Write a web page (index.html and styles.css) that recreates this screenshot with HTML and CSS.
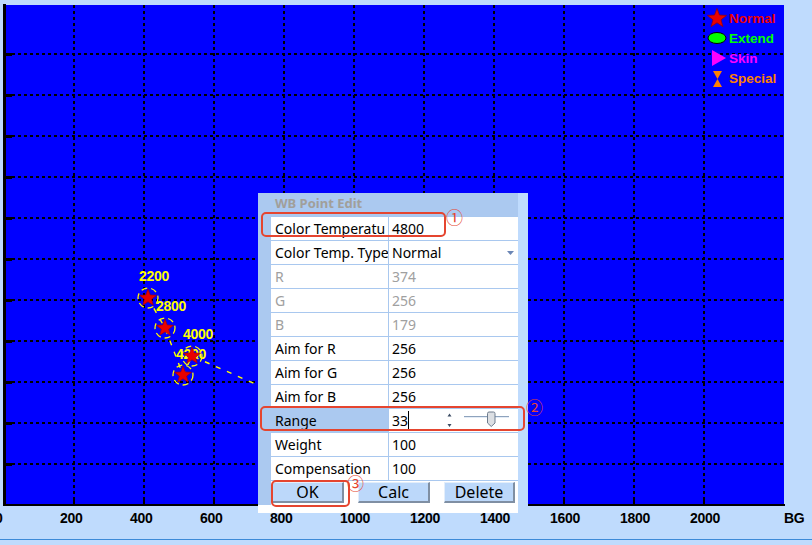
FILE: index.html
```html
<!DOCTYPE html>
<html lang="en">
<head>
<meta charset="utf-8">
<title>WB Point Edit</title>
<link rel="stylesheet" href="styles.css">
</head>
<body>
<main class="app">
  <svg class="plot" width="812" height="539" viewBox="0 0 812 539">
    <defs>
      <path id="star" d="M0,-9 L2.23,-3.07 L8.56,-2.78 L3.61,1.17 L5.29,7.28 L0,3.8 L-5.29,7.28 L-3.61,1.17 L-8.56,-2.78 L-2.23,-3.07Z"/>
    </defs>
    <rect class="plot-bg" x="6" y="5" width="778" height="499"/>
    <path class="grid" d="M6 54H784M6 95H784M6 136H784M6 177H784M6 218H784M6 259H784M6 300H784M6 341H784M6 382H784M6 423H784M6 464H784"/>
    <path class="grid" d="M74 5V499M144 5V499M214 5V499M284 5V499M354 5V499M424 5V499M494 5V499M564 5V499M634 5V499M704 5V499"/>
    <g class="axis">
      <rect x="3" y="4" width="3" height="502"/>
      <rect x="3" y="504" width="782" height="2"/>
      <rect x="6" y="53" width="6" height="3"/>
      <rect x="6" y="94" width="6" height="3"/>
      <rect x="6" y="135" width="6" height="3"/>
      <rect x="6" y="176" width="6" height="3"/>
      <rect x="6" y="217" width="6" height="3"/>
      <rect x="6" y="258" width="6" height="3"/>
      <rect x="6" y="299" width="6" height="3"/>
      <rect x="6" y="340" width="6" height="3"/>
      <rect x="6" y="381" width="6" height="3"/>
      <rect x="6" y="422" width="6" height="3"/>
      <rect x="6" y="463" width="6" height="3"/>
      <rect x="73" y="499" width="2" height="5"/>
      <rect x="143" y="499" width="2" height="5"/>
      <rect x="213" y="499" width="2" height="5"/>
      <rect x="283" y="499" width="2" height="5"/>
      <rect x="353" y="499" width="2" height="5"/>
      <rect x="423" y="499" width="2" height="5"/>
      <rect x="493" y="499" width="2" height="5"/>
      <rect x="563" y="499" width="2" height="5"/>
      <rect x="633" y="499" width="2" height="5"/>
      <rect x="703" y="499" width="2" height="5"/>
    </g>
    <g class="tick-labels">
      <text x="-5" y="523">0</text>
      <text x="60" y="523">200</text>
      <text x="130" y="523">400</text>
      <text x="200" y="523">600</text>
      <text x="270" y="523">800</text>
      <text x="340" y="523">1000</text>
      <text x="410" y="523">1200</text>
      <text x="480" y="523">1400</text>
      <text x="550" y="523">1600</text>
      <text x="620" y="523">1800</text>
      <text x="690" y="523">2000</text>
      <text x="784" y="523">BG</text>
    </g>
    <polyline class="curve" points="148,298 165,328 183,375 192,356 262,387"/>
    <g class="pt-labels">
      <text x="139" y="281">2200</text>
      <text x="156" y="311">2800</text>
      <text x="183" y="339">4000</text>
      <text x="176" y="359">4200</text>
    </g>
    <g class="halos">
      <circle cx="148" cy="298" r="10"/>
      <circle cx="165" cy="328" r="10"/>
      <circle cx="192" cy="356" r="10"/>
      <circle cx="183" cy="375" r="10"/>
    </g>
    <g class="stars">
      <use href="#star" transform="translate(148 298)"/>
      <use href="#star" transform="translate(165 328)"/>
      <use href="#star" transform="translate(192 356)"/>
      <use href="#star" transform="translate(183 375)"/>
    </g>
  </svg>
  <div class="statusbar"></div>

  <ul class="legend">
    <li class="lg lg-normal">
      <svg class="lg-icon" viewBox="0 0 22 20" width="22" height="20"><path transform="translate(11 10.5) scale(1.12)" d="M0,-9 L2.23,-3.07 L8.56,-2.78 L3.61,1.17 L5.29,7.28 L0,3.8 L-5.29,7.28 L-3.61,1.17 L-8.56,-2.78 L-2.23,-3.07Z"/></svg>
      <span>Normal</span>
    </li>
    <li class="lg lg-extend">
      <svg class="lg-icon" viewBox="0 0 22 20" width="22" height="20"><ellipse cx="11" cy="10" rx="9" ry="5.5"/></svg>
      <span>Extend</span>
    </li>
    <li class="lg lg-skin">
      <svg class="lg-icon" viewBox="0 0 22 20" width="22" height="20"><path d="M6 2L20 10L6 18Z"/></svg>
      <span>Skin</span>
    </li>
    <li class="lg lg-special">
      <svg class="lg-icon" viewBox="0 0 22 20" width="22" height="20"><path d="M7 3H16L11.5 11L16 19H7L11.5 11Z"/></svg>
      <span>Special</span>
    </li>
  </ul>

  <section class="dialog">
    <header class="dlg-title">WB Point Edit</header>
    <div class="dlg-main">
      <div class="panel">
        <div class="row"><span class="k">Color Temperatu</span><span class="v">4800</span></div>
        <div class="row"><span class="k">Color Temp. Type</span><span class="v">Normal<svg class="dd" width="7" height="4" viewBox="0 0 7 4"><path d="M0 0H7L3.5 4Z"/></svg></span></div>
        <div class="row dim"><span class="k">R</span><span class="v">374</span></div>
        <div class="row dim"><span class="k">G</span><span class="v">256</span></div>
        <div class="row dim"><span class="k">B</span><span class="v">179</span></div>
        <div class="row"><span class="k">Aim for R</span><span class="v">256</span></div>
        <div class="row"><span class="k">Aim for G</span><span class="v">256</span></div>
        <div class="row"><span class="k">Aim for B</span><span class="v">256</span></div>
        <div class="row"><span class="k sel">Range</span><span class="v">33<i class="caret"></i>
          <svg class="range-ctl" width="68" height="23" viewBox="0 0 68 23">
            <path class="spin" d="M2.5 7.5H6.5L4.5 4.5Z M2.5 15H6.5L4.5 18Z"/>
            <path class="track" d="M19 7.5H64"/>
            <path class="track-lo" d="M19 8.5H64"/>
            <path class="thumb" d="M42.5 4.5Q42.5 3 44 3H48.5Q50 3 50 4.5V14L46.25 17.5L42.5 14Z"/>
          </svg></span></div>
        <div class="row"><span class="k">Weight</span><span class="v">100</span></div>
        <div class="row"><span class="k">Compensation</span><span class="v">100</span></div>
        <div class="btns">
          <button class="btn">OK</button>
          <button class="btn">Calc</button>
          <button class="btn btn-del">Delete</button>
        </div>
      </div>
    </div>
    <div class="dlg-foot"></div>
  </section>

  <div class="mark mark-1"></div>
  <span class="num num-1">①</span>
  <div class="mark mark-2"></div>
  <span class="num num-2">②</span>
  <div class="mark mark-3"></div>
  <span class="num num-3">③</span>
</main>
</body>
</html>
```
FILE: styles.css
```css
* { box-sizing: border-box; }
html, body { margin: 0; padding: 0; }
body {
  background: #bfdbfd;
  font-family: "Noto Sans", "Liberation Sans", sans-serif;
}
.app {
  position: relative;
  width: 812px;
  height: 545px;
  overflow: hidden;
  background: #bfdbfd;
}
.plot { display: block; }
.plot-bg { fill: #0000ff; }
.grid {
  fill: none;
  stroke: #000;
  stroke-width: 2;
  stroke-dasharray: 3 3;
}
.axis rect { fill: #000; }
.tick-labels text {
  font: bold 14px "Liberation Sans", Arial, sans-serif;
  letter-spacing: -0.3px;
  fill: #000;
}
.pt-labels text {
  font: bold 14px "Liberation Sans", Arial, sans-serif;
  letter-spacing: -0.3px;
  fill: #ffff00;
}
.curve {
  fill: none;
  stroke: #ffff00;
  stroke-width: 1.4;
  stroke-dasharray: 5 7;
}
.halos circle {
  fill: none;
  stroke: #ffff00;
  stroke-width: 1.3;
  stroke-dasharray: 6 4;
}
.stars use { fill: #e80000; stroke: #a00000; stroke-width: 0.6; }
.statusbar {
  height: 6px;
  border-top: 1px solid #3d8ad8;
}

/* legend */
.legend {
  position: absolute;
  left: 706px;
  top: 8px;
  margin: 0;
  padding: 0;
  list-style: none;
}
.lg {
  display: flex;
  align-items: center;
  height: 20px;
  gap: 1px;
  font: bold 13.5px "Liberation Sans", Arial, sans-serif;
}
.lg-icon { display: block; }
.lg-normal { color: #ee0000; }
.lg-normal path { fill: #e80000; stroke: #900000; stroke-width: 0.6; }
.lg-extend { color: #00ff00; }
.lg-extend ellipse { fill: #00ff00; stroke: #000; stroke-width: 1; }
.lg-skin { color: #ff00ff; }
.lg-skin path { fill: #ff00ff; }
.lg-special { color: #ff8000; }
.lg-special path { fill: #ff8000; }

/* dialog */
.dialog {
  position: absolute;
  left: 258px;
  top: 193px;
  width: 270px;
  height: 320px;
  background: #abc9f0;
  border-right: 10px solid #bfdbfd;
  display: flex;
  flex-direction: column;
}
.dlg-title {
  height: 23px;
  padding: 3px 0 0 17px;
  font: bold 13px/14px "Noto Sans", sans-serif;
  color: #a19f9a;
}
.dlg-main {
  flex: 1;
  display: flex;
  padding-left: 13px;
}
.panel {
  flex: 1;
  background: #fff;
  border-top: 1px solid #a9c8ef;
  display: flex;
  flex-direction: column;
}
.dlg-foot {
  height: 8px;
  background: #fff;
}
.row {
  display: grid;
  grid-template-columns: 118px 1fr;
  height: 24px;
  border-bottom: 1px solid #a9c8ef;
  font-size: 14px;
  line-height: 23px;
  color: #000;
}
.row .k {
  padding-left: 4px;
  border-right: 1px solid #a9c8ef;
  white-space: nowrap;
  overflow: hidden;
}
.row .k.sel { background: #abc9f0; }
.row .v {
  padding-left: 3px;
  display: flex;
  align-items: center;
  white-space: nowrap;
}
.row.dim { color: #a0a0a0; }
.dd { margin-left: auto; margin-right: 4px; }
.dd path { fill: #6b86b5; }
.caret {
  display: block;
  width: 1px;
  height: 20px;
  background: #000;
}
.range-ctl { margin-left: auto; margin-right: 5px; display: block; }
.spin { fill: #3a4b63; }
.track { stroke: #8ea3bd; stroke-width: 1; fill: none; }
.track-lo { stroke: #e4ecf6; stroke-width: 1; fill: none; }
.thumb { fill: #dcdfe3; stroke: #6f7d8e; stroke-width: 1; }

.btns {
  height: 24px;
  display: flex;
  gap: 14px;
  padding: 1px 0 0 1px;
}
.btn {
  width: 72px;
  height: 21px;
  margin: 0;
  padding: 0;
  background: #bcd8fa;
  border-style: solid;
  border-width: 1px 2px 2px 1px;
  border-color: #e3eefb #7f8fa3 #7f8fa3 #e3eefb;
  font: 16px/18px "Noto Sans", sans-serif;
  color: #000;
  display: flex;
  align-items: center;
  justify-content: center;
}
.btn-del { width: 71px; }

/* annotations */
.mark {
  position: absolute;
  border: 2px solid #e5452f;
  border-radius: 5px;
}
.mark-1 { left: 261px; top: 212px; width: 185px; height: 25px; }
.mark-2 { left: 260px; top: 406px; width: 265px; height: 25px; }
.mark-3 { left: 271px; top: 480px; width: 79px; height: 27px; }
.num {
  position: absolute;
  font: 17px/17px "Noto Sans CJK SC", sans-serif;
  color: #e5452f;
}
.num-1 { left: 446px; top: 208px; }
.num-2 { left: 526px; top: 398px; }
.num-3 { left: 347px; top: 474px; }
```
